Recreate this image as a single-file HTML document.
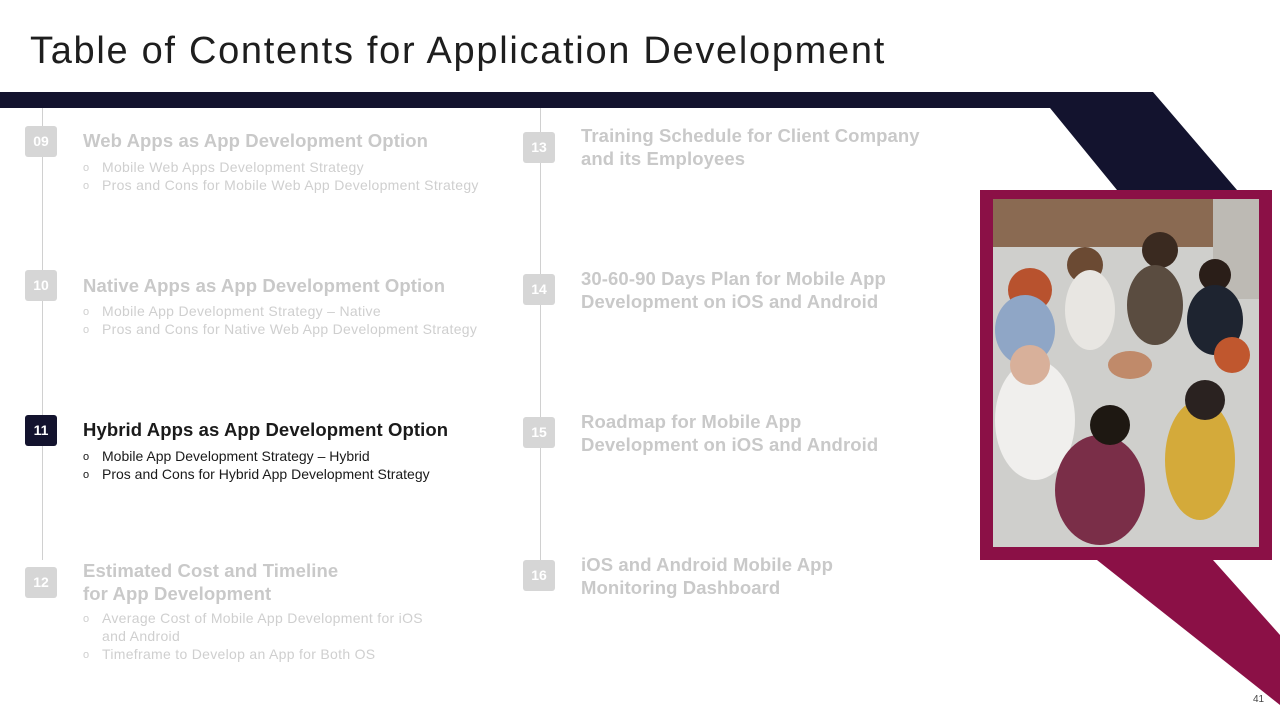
<!DOCTYPE html>
<html><head><meta charset="utf-8"><style>
*{margin:0;padding:0;box-sizing:border-box}
body{width:1280px;height:720px;overflow:hidden;background:#fff;font-family:"Liberation Sans",Arial,sans-serif;position:relative}
.h1{position:absolute;left:30px;top:30px;font-size:38px;color:#1e1e1e;letter-spacing:1.7px;white-space:nowrap}
.vl{position:absolute;width:1px;background:#d0d0d0}
.b{position:absolute;width:32px;height:31px;border-radius:3px;background:#d6d6d6;color:#fff;font-weight:bold;font-size:14px;text-align:center;line-height:31px}
.b.on{background:#13132e}
.t{position:absolute;font-weight:bold;font-size:18.5px;color:#c9c9c9;letter-spacing:0.1px;line-height:23px;white-space:nowrap}
.t.on{color:#1a1a1a}
ul{position:absolute;list-style:none;font-size:14px;color:#cfcfcf;line-height:18px;letter-spacing:0.3px}
ul.on{color:#1a1a1a;letter-spacing:0}
li{position:relative;padding-left:19px;white-space:nowrap}
li:before{content:"o";position:absolute;left:0;top:1px;font-size:11px}
.pg{position:absolute;left:1253px;top:694px;font-size:10px;color:#444;z-index:2}
</style></head><body>
<div class="h1">Table of Contents for Application Development</div>
<svg width="1280" height="720" style="position:absolute;left:0;top:0">
<polygon points="0,92 1153,92 1237,190 1117,190 1050,108 0,108" fill="#13132e"/>
<polygon points="1097,560 1213,560 1280,635 1280,705" fill="#8b1046"/>
<rect x="980" y="190" width="292" height="370" fill="#8b1046"/>
<rect x="993" y="199" width="266" height="348" fill="#cfcfcc"/>
<rect x="993" y="199" width="220" height="48" fill="#8a6a52"/>
<rect x="1213" y="199" width="46" height="100" fill="#bdbab4"/>
<circle cx="1030" cy="290" r="22" fill="#b8522e"/>
<ellipse cx="1025" cy="330" rx="30" ry="35" fill="#8fa6c6"/>
<circle cx="1085" cy="265" r="18" fill="#6b4a33"/>
<ellipse cx="1090" cy="310" rx="25" ry="40" fill="#e8e6e2"/>
<circle cx="1160" cy="250" r="18" fill="#3a2a20"/>
<ellipse cx="1155" cy="305" rx="28" ry="40" fill="#5a4c40"/>
<circle cx="1215" cy="275" r="16" fill="#2a1e18"/>
<ellipse cx="1215" cy="320" rx="28" ry="35" fill="#1e2430"/>
<circle cx="1232" cy="355" r="18" fill="#c0572e"/>
<ellipse cx="1035" cy="420" rx="40" ry="60" fill="#f0efed"/>
<circle cx="1030" cy="365" r="20" fill="#d8b09a"/>
<ellipse cx="1100" cy="490" rx="45" ry="55" fill="#7a2e48"/>
<circle cx="1110" cy="425" r="20" fill="#1e1812"/>
<ellipse cx="1200" cy="460" rx="35" ry="60" fill="#d4aa3a"/>
<circle cx="1205" cy="400" r="20" fill="#2a2220"/>
<ellipse cx="1130" cy="365" rx="22" ry="14" fill="#c08a6a"/>
</svg>
<div class="vl" style="left:42px;top:108px;height:452px"></div>
<div class="vl" style="left:540px;top:108px;height:480px"></div>

<div class="b" style="left:25px;top:126px">09</div>
<div class="t" style="left:83px;top:129px">Web Apps as App Development Option</div>
<ul style="left:83px;top:158px"><li>Mobile Web Apps Development Strategy</li><li>Pros and Cons for Mobile Web App Development Strategy</li></ul>

<div class="b" style="left:25px;top:270px">10</div>
<div class="t" style="left:83px;top:274px">Native Apps as App Development Option</div>
<ul style="left:83px;top:302px"><li>Mobile App Development Strategy – Native</li><li>Pros and Cons for Native Web App Development Strategy</li></ul>

<div class="b on" style="left:25px;top:415px">11</div>
<div class="t on" style="left:83px;top:418px">Hybrid Apps as App Development Option</div>
<ul class="on" style="left:83px;top:447px"><li>Mobile App Development Strategy – Hybrid</li><li>Pros and Cons for Hybrid App Development Strategy</li></ul>

<div class="b" style="left:25px;top:567px">12</div>
<div class="t" style="left:83px;top:559px">Estimated Cost and Timeline<br>for App Development</div>
<ul style="left:83px;top:609px"><li>Average Cost of Mobile App Development for iOS<br>and Android</li><li>Timeframe to Develop an App for Both OS</li></ul>

<div class="b" style="left:523px;top:132px">13</div>
<div class="t" style="left:581px;top:124px">Training Schedule for Client Company<br>and its Employees</div>
<div class="b" style="left:523px;top:274px">14</div>
<div class="t" style="left:581px;top:267px">30-60-90 Days Plan for Mobile App<br>Development on iOS and Android</div>
<div class="b" style="left:523px;top:417px">15</div>
<div class="t" style="left:581px;top:410px">Roadmap for Mobile App<br>Development on iOS and Android</div>
<div class="b" style="left:523px;top:560px">16</div>
<div class="t" style="left:581px;top:553px">iOS and Android Mobile App<br>Monitoring Dashboard</div>

<div class="pg">41</div>
</body></html>
